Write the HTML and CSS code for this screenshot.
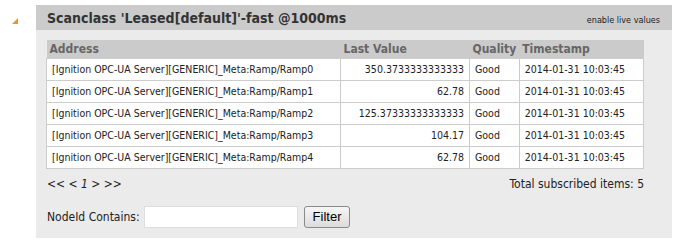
FILE: index.html
```html
<html>
<head>
    <link rel="stylesheet" href="styles.css">
</head>
<body>
    <div class="wrap">
        <div class="toggle"></div>

        <div class="panel">
            <div class="panel_head">
                <span class="title">Scanclass 'Leased[default]'-fast @1000ms</span>
                <a class="live" href="#">enable live values</a>
            </div>

            <div class="panel_body">
                <table class="items">
                    <tr>
                        <th class="col_addr">Address</th>
                        <th class="col_val">Last Value</th>
                        <th class="col_q">Quality</th>
                        <th class="col_ts">Timestamp</th>
                    </tr>
                    <tr><td>[Ignition OPC-UA Server][GENERIC]_Meta:Ramp/Ramp0</td><td class="num">350.3733333333333</td><td>Good</td><td>2014-01-31 10:03:45</td></tr>
                    <tr><td>[Ignition OPC-UA Server][GENERIC]_Meta:Ramp/Ramp1</td><td class="num">62.78</td><td>Good</td><td>2014-01-31 10:03:45</td></tr>
                    <tr><td>[Ignition OPC-UA Server][GENERIC]_Meta:Ramp/Ramp2</td><td class="num">125.37333333333333</td><td>Good</td><td>2014-01-31 10:03:45</td></tr>
                    <tr><td>[Ignition OPC-UA Server][GENERIC]_Meta:Ramp/Ramp3</td><td class="num">104.17</td><td>Good</td><td>2014-01-31 10:03:45</td></tr>
                    <tr><td>[Ignition OPC-UA Server][GENERIC]_Meta:Ramp/Ramp4</td><td class="num">62.78</td><td>Good</td><td>2014-01-31 10:03:45</td></tr>
                </table>

                <div class="pager_row">
                    <span class="pager">&lt;&lt; &lt; 1 &gt; &gt;&gt;</span>
                    <span class="total">Total subscribed items: 5</span>
                </div>

                <form class="filter">
                    <label for="nodeid">NodeId Contains:</label>
                    <input type="text" id="nodeid">
                    <button type="button">Filter</button>
                </form>
            </div>
        </div>
    </div>
</body>
</html>
```

FILE: styles.css
```css
html {
    font-family: "DejaVu Sans Condensed", "DejaVu Sans", sans-serif;
    color: #222;
}
body {
    margin: 0;
    background-color: #fff;
}

.wrap {
    display: flex;
    padding: 5px 18px 0 12px;
}

.toggle {
    width: 0;
    height: 0;
    margin-top: 13px;
    margin-right: 18px;
    border-left: 6px solid transparent;
    border-bottom: 6px solid #e8952a;
}

.panel {
    width: 636px;
    background-color: #ebebeb;
}

.panel_head {
    display: flex;
    justify-content: space-between;
    align-items: center;
    height: 25px;
    padding: 0 12px 0 11px;
    background-color: #cbcbcb;
}

.title {
    font-size: 14px;
    font-weight: bold;
    color: #333;
}

.live {
    font-size: 9px;
    color: #222;
    text-decoration: none;
    margin-top: 5px;
}

.panel_body {
    padding: 10px 28px 10px 10px;
}

.items {
    width: 598px;
    border-collapse: collapse;
    font-size: 10.5px;
}

.items th {
    background-color: #cbcbcb;
    color: #666;
    font-size: 12px;
    text-align: left;
    height: 18px;
    padding: 0 3px;
}

.items td {
    background-color: #fff;
    border: 1px solid #ccc;
    height: 22px;
    padding: 0 5px;
}

.items .num {
    text-align: right;
}

.col_addr { width: 288px; }
.col_val { width: 123px; }
.col_q { width: 43px; }

.pager_row {
    display: flex;
    justify-content: space-between;
    margin-top: 8px;
    font-size: 12px;
}

.pager {
    font-style: italic;
    padding-left: 1px;
}

.filter {
    display: flex;
    align-items: center;
    margin: 15px 0 0 1px;
    font-size: 12px;
}

.filter input {
    width: 154px;
    height: 22px;
    margin: 0 6px 0 4px;
    border: 1px solid #ddd;
}

.filter button {
    height: 22px;
    padding: 0 8px;
    font-family: "Liberation Sans", sans-serif;
    font-size: 13px;
    background: linear-gradient(#f6f6f6, #dcdcdc);
    border: 1px solid #8a8a8a;
    border-radius: 3px;
}
```
